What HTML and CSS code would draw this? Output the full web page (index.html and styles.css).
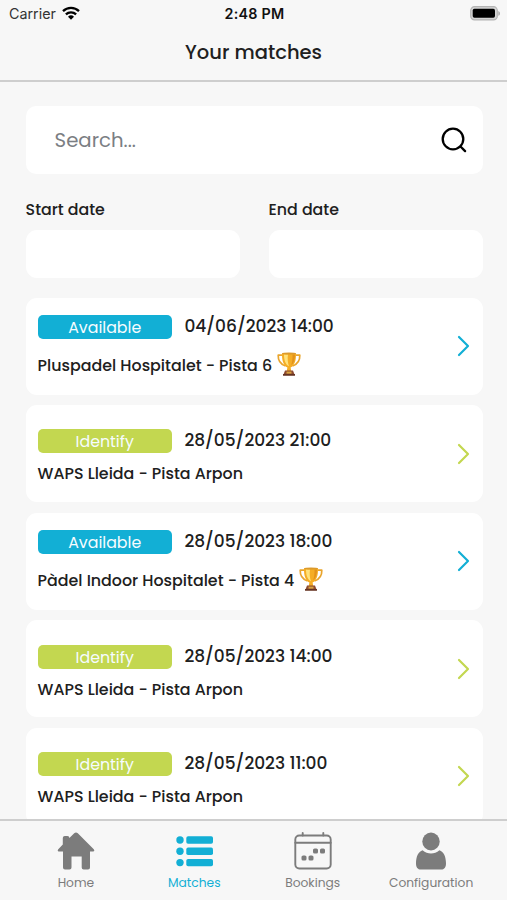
FILE: index.html
```html
<!DOCTYPE html>
<html lang="en">
<head>
<meta charset="utf-8">
<meta name="viewport" content="width=device-width, initial-scale=1">
<title>Your matches</title>
<link rel="stylesheet" href="styles.css">
</head>
<body>
<svg class="defs" aria-hidden="true">
  <symbol id="chevron" viewBox="0 0 14 22"><path d="M2 2l9 9-9 9" fill="none" stroke="currentColor" stroke-width="2.2" stroke-linecap="round" stroke-linejoin="round"/></symbol>
  <symbol id="trophy" viewBox="0 0 24 24">
    <path d="M6 3.2H1.2C1 8.200 3 12 8.500 14M18 3.200h4.800C23 8.200 21 12 15.500 14" fill="none" stroke="#e9a52d" stroke-width="1.700" stroke-linejoin="round"/>
    <path d="M5 1.200h14c.2 7.200-1.400 12.200-5.400 14.300l.7 3.700H9.700l.7-3.700C6.400 13.400 4.800 8.400 5 1.200z" fill="#f5ad25"/>
    <path d="M7 2.500h4c-.7 4-.2 8.500 1 11.800C8.400 12.500 7 8 7 2.500z" fill="#ffe27a"/>
    <path d="M15.500 2.500H18c0 5-1.200 8.800-3.800 10.800 1-3 1.500-7 1.300-10.800z" fill="#e2921c"/>
    <ellipse cx="12" cy="1.500" rx="7" ry="1" fill="#dc9a2b"/>
    <path d="M8 18.500h8l1.800 4.700H6.200z" fill="#8c4a31"/>
    <path d="M9.500 19.600h5v2h-5z" fill="#d8a33f"/>
    <path d="M6 22h12v1.700H6z" fill="#643323"/>
  </symbol>
</svg>
<div class="app">
  <header class="header">
    <div class="status">
      <div class="carrier"><span class="carrier-name">Carrier</span>
        <svg class="wifi" viewBox="0 0 18 14"><g fill="none" stroke="#000" stroke-width="2.300"><path d="M1 5.200a11.500 11.500 0 0 1 16 0"/><path d="M3.900 8.400a7.300 7.300 0 0 1 10.200 0"/></g><path d="M6 10.700a4.400 4.400 0 0 1 6 0L9 13.700z"/></svg>
      </div>
      <div class="clock">2:48 PM</div>
      <svg class="battery" viewBox="0 0 30 15"><rect x=".7" y=".7" width="26.600" height="13.200" rx="3.800" fill="#d5d5d5" stroke="#b4b4b4" stroke-width="1.200"/><rect x="2.700" y="2.800" width="22.300" height="9" rx="1.700"/><path d="M28.300 5c2.200.8 2.200 4 0 4.800z" fill="#aaa"/></svg>
    </div>
    <h1 class="title">Your matches</h1>
  </header>
  <main class="content">
    <div class="search">
      <span class="placeholder">Search...</span>
      <svg class="search-icon" viewBox="0 0 26 26"><g fill="none" stroke="#000" stroke-width="2.300" stroke-linecap="round"><circle cx="12" cy="12" r="10.300"/><path d="M19.500 19.500l4.600 4.600"/></g></svg>
    </div>
    <div class="dates">
      <div class="field"><span class="label">Start date</span><div class="box"></div></div>
      <div class="field"><span class="label">End date</span><div class="box"></div></div>
    </div>
    <div class="list">
      <article class="card available">
        <div class="info"><div class="row"><span class="badge">Available</span><time class="when">04/06/2023 14:00</time></div>
        <div class="venue"><span>Pluspadel Hospitalet - Pista 6</span><svg class="trophy"><use href="#trophy"/></svg></div></div>
        <svg class="chevron"><use href="#chevron"/></svg>
      </article>
      <article class="card identify">
        <div class="info"><div class="row"><span class="badge">Identify</span><time class="when">28/05/2023 21:00</time></div>
        <div class="venue"><span>WAPS Lleida - Pista Arpon</span></div></div>
        <svg class="chevron"><use href="#chevron"/></svg>
      </article>
      <article class="card available">
        <div class="info"><div class="row"><span class="badge">Available</span><time class="when">28/05/2023 18:00</time></div>
        <div class="venue"><span>Pàdel Indoor Hospitalet - Pista 4</span><svg class="trophy"><use href="#trophy"/></svg></div></div>
        <svg class="chevron"><use href="#chevron"/></svg>
      </article>
      <article class="card identify">
        <div class="info"><div class="row"><span class="badge">Identify</span><time class="when">28/05/2023 14:00</time></div>
        <div class="venue"><span>WAPS Lleida - Pista Arpon</span></div></div>
        <svg class="chevron"><use href="#chevron"/></svg>
      </article>
      <article class="card identify">
        <div class="info"><div class="row"><span class="badge">Identify</span><time class="when">28/05/2023 11:00</time></div>
        <div class="venue"><span>WAPS Lleida - Pista Arpon</span></div></div>
        <svg class="chevron"><use href="#chevron"/></svg>
      </article>
    </div>
  </main>
  <nav class="tabs">
    <a class="tab"><svg class="icon" viewBox="0 0 38 38"><path d="M17.200 1.300q1.800-1.600 3.600 0L36.500 17c1.400 1.500.8 2.600-1 2.600H33V35.500q0 2-2 2h-4.300q-2 0-2-2V24.500H14.500v11q0 2-2 2H8q-2 0-2-2V19.600H2.300c-1.800 0-2-1.200-.8-2.600L5.800 12.500V6q0-2 2-2h2.600q2 0 2 2z" fill="currentColor"/></svg><span>Home</span></a>
    <a class="tab active"><svg class="icon" viewBox="0 0 38 38"><g fill="currentColor"><circle cx="5" cy="8" r="3.700"/><circle cx="5" cy="19.300" r="3.700"/><circle cx="5" cy="30.600" r="3.700"/><rect x="11.300" y="4.300" width="26.700" height="7.400" rx="1.800"/><rect x="11.300" y="15.600" width="26.700" height="7.400" rx="1.800"/><rect x="11.300" y="26.900" width="26.700" height="7.400" rx="1.800"/></g></svg><span>Matches</span></a>
    <a class="tab"><svg class="icon" viewBox="0 0 38 38"><g fill="none" stroke="currentColor" stroke-width="1.900" stroke-linecap="round"><rect x="1.300" y="3.500" width="35.400" height="33" rx="4"/><path d="M1.300 10.800h35.400M8.700 1v2.500M29.300 1v2.500"/></g><g fill="currentColor"><rect x="19" y="16.500" width="5" height="5" rx="1.600"/><rect x="26" y="16.500" width="5" height="5" rx="1.600"/><rect x="7.500" y="23.500" width="5" height="5" rx="1.600"/><rect x="14.500" y="23.500" width="5" height="5" rx="1.600"/></g></svg><span>Bookings</span></a>
    <a class="tab"><svg class="icon" viewBox="0 0 38 38"><g fill="currentColor"><ellipse cx="19" cy="9.500" rx="8.700" ry="9"/><path d="M10.600 18.200c5 4.400 11.800 4.400 16.800 0 4.300 1.300 6.600 6.500 6.600 13 0 4-1.600 6.300-5 6.300H9c-3.400 0-5-2.300-5-6.300 0-6.500 2.300-11.700 6.600-13z"/></g></svg><span>Configuration</span></a>
  </nav>
</div>
</body>
</html>
```
FILE: styles.css
```css
* { box-sizing: border-box; }
body { margin: 0; background: #f7f7f7; color: #202020; font-family: Poppins, Inter, sans-serif; font-weight: 500; }
svg { display: block; flex: none; }
.defs { display: none; }
.app { width: 507px; height: 900px; display: flex; flex-direction: column; overflow: hidden; }
.header { flex: none; height: 82px; border-bottom: 2px solid #cecece; }
.status { height: 27px; padding: 0 7px 0 9px; display: grid; grid-template-columns: 1fr auto 1fr; align-items: center; font-family: Inter, sans-serif; }
.carrier { display: flex; align-items: center; gap: 6px; font-size: 14.300px; font-weight: 400; color: #333; }
.wifi { width: 18px; height: 14px; margin-top: -1px; }
.clock { font-size: 14.300px; font-weight: 600; letter-spacing: .25px; color: #111; }
.battery { width: 30px; height: 15px; justify-self: end; margin-top: -1px; }
.title { margin: 10px 0 0; text-align: center; font-size: 19.500px; line-height: 32px; font-weight: 500; }
.content { flex: 1; min-height: 0; overflow: hidden; padding: 24px 24.500px 0 25.600px; }
.search { height: 68px; background: #fff; border-radius: 10px; display: flex; align-items: center; justify-content: space-between; padding: 0 16px 0 29px; }
.placeholder { color: #7b7e83; font-size: 19.700px; font-weight: 400; }
.search-icon { width: 26px; height: 26px; }
.dates { margin-top: 24px; display: grid; grid-template-columns: 1fr 1fr; gap: 29px; }
.label { display: block; font-size: 15.800px; line-height: 24px; height: 31.500px; }
.box { height: 48.500px; background: #fff; border-radius: 11px; }
.list { margin-top: 19.500px; display: grid; grid-auto-rows: 97.200px; gap: 10.400px; }
.card { background: #fff; border-radius: 11px; padding: 0 11.500px 0 12px; display: flex; align-items: center; justify-content: space-between; }
.available { color: #12afd5; }
.identify { color: #c3d750; }
.info { color: #202020; }
.row { display: flex; align-items: center; gap: 12.600px; height: 24px; }
.badge { width: 134.200px; height: 24px; border-radius: 5px; text-align: center; font-size: 15.800px; line-height: 25.500px; font-weight: 400; color: #f6fcff; }
.available .badge { background: #12afd5; }
.identify .badge { background: #c3d750; }
.when { font-size: 17.050px; line-height: 24px; position: relative; top: -1px; white-space: nowrap; }
.venue { display: flex; align-items: center; gap: 4.700px; font-size: 15.870px; line-height: 24px; white-space: nowrap; }
.available .venue { margin-top: 15px; }
.identify .venue { margin-top: 9px; }
.available .info { padding-top: 1px; }
.identify .info { padding-top: 8.500px; }
.trophy { width: 24px; height: 24px; position: relative; top: -2px; }
.chevron { width: 14px; height: 22px; }
.tabs { flex: none; height: 81px; border-top: 2px solid #cecece; display: grid; grid-template-columns: repeat(4, 118.400px); justify-content: center; padding-top: 11px; }
.tab { display: flex; flex-direction: column; align-items: center; color: #7c7c7c; font-size: 12.250px; font-weight: 400; line-height: 20px; }
.tab.active { color: #12afd5; }
.icon { width: 38px; height: 38px; margin-bottom: 3px; }
```
